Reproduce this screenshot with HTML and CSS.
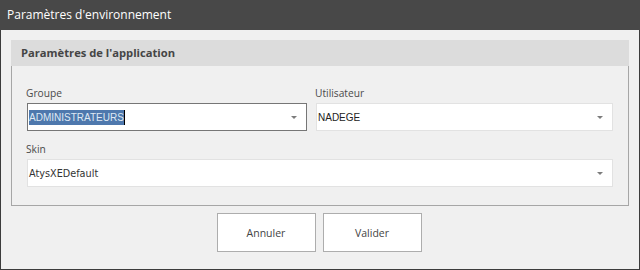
FILE: index.html
```html
<!DOCTYPE html>
<html lang="fr">
<head>
    <meta charset="UTF-8">
    <title>Paramètres d'environnement</title>
    <link rel="stylesheet" href="styles.css">
</head>
<body>

    <div class="window">
        <div class="titlebar">Paramètres d'environnement</div>

        <div class="content">
            <div class="group">
                <div class="group-header">Paramètres de l'application</div>
                <div class="group-body">
                    <div class="field">
                        <label>Groupe</label>
                        <div class="combo focused">
                            <span class="value"><span class="selected">ADMINISTRATEURS</span><span class="caret"></span></span>
                            <span class="arrow"></span>
                        </div>
                    </div>
                    <div class="field">
                        <label>Utilisateur</label>
                        <div class="combo">
                            <span class="value">NADEGE</span>
                            <span class="arrow"></span>
                        </div>
                    </div>
                    <div class="field wide">
                        <label>Skin</label>
                        <div class="combo">
                            <span class="value skin">AtysXEDefault</span>
                            <span class="arrow"></span>
                        </div>
                    </div>
                </div>
            </div>

            <div class="buttons">
                <button class="btn">Annuler</button>
                <button class="btn">Valider</button>
            </div>
        </div>
    </div>

</body>
</html>
```

FILE: styles.css
```css
body {
    margin: 0;
    font-family: "Open Sans", "Noto Sans", sans-serif;
    background: #f0f0f0;
}

.window {
    width: 640px;
    height: 270px;
    box-sizing: border-box;
    border: 1px solid #3c3c3c;
    border-top: none;
    background: #f0f0f0;
}

.titlebar {
    height: 30px;
    margin: 0 -1px;
    padding-left: 7px;
    background: #484848;
    color: #fff;
    font-size: 12px;
    line-height: 29px;
}

.content {
    padding: 10px 10px 0 10px;
}

.group-header {
    height: 26px;
    padding-left: 10px;
    background: #dcdcdc;
    color: #454545;
    font-size: 11.2px;
    font-weight: bold;
    line-height: 25px;
}

.group-body {
    display: grid;
    grid-template-columns: 281px 1fr;
    column-gap: 8px;
    row-gap: 10px;
    padding: 19px 15px 18px 14px;
    border: 1px solid #a6a6a6;
    border-top: none;
}

.field.wide {
    grid-column: 1 / 3;
}

.field label {
    display: block;
    height: 16px;
    margin-bottom: 2px;
    color: #4a4a4a;
    font-size: 10.2px;
    line-height: 16px;
}

.combo {
    position: relative;
    display: flex;
    align-items: center;
    height: 28px;
    margin-left: 1px;
    box-sizing: border-box;
    border: 1px solid #e2e2e2;
    background: #fff;
}

.combo.focused {
    border-color: #767676;
}

.value {
    display: flex;
    align-items: center;
    padding-left: 1px;
    font-family: "Liberation Sans", Arial, sans-serif;
    font-size: 10px;
    color: #222;
}

.value.skin {
    font-family: "DejaVu Sans", sans-serif;
    font-size: 9.7px;
    color: #333;
}

.selected {
    background: #4e78ad;
    color: #dfe8f3;
    line-height: 15px;
}

.caret {
    display: inline-block;
    width: 1px;
    height: 15px;
    background: #000;
}

.arrow {
    position: absolute;
    right: 9px;
    top: 12px;
    width: 0;
    height: 0;
    border-left: 3px solid transparent;
    border-right: 3px solid transparent;
    border-top: 3px solid #7c7c7c;
}

.buttons {
    display: flex;
    justify-content: center;
    gap: 7px;
    margin-top: 7px;
    padding-right: 2px;
}

.btn {
    width: 99px;
    height: 39px;
    border: 1px solid #adadad;
    background: #fff;
    color: #444;
    font-family: "Open Sans", "Noto Sans", sans-serif;
    font-size: 10.5px;
    padding: 0;
}
```
